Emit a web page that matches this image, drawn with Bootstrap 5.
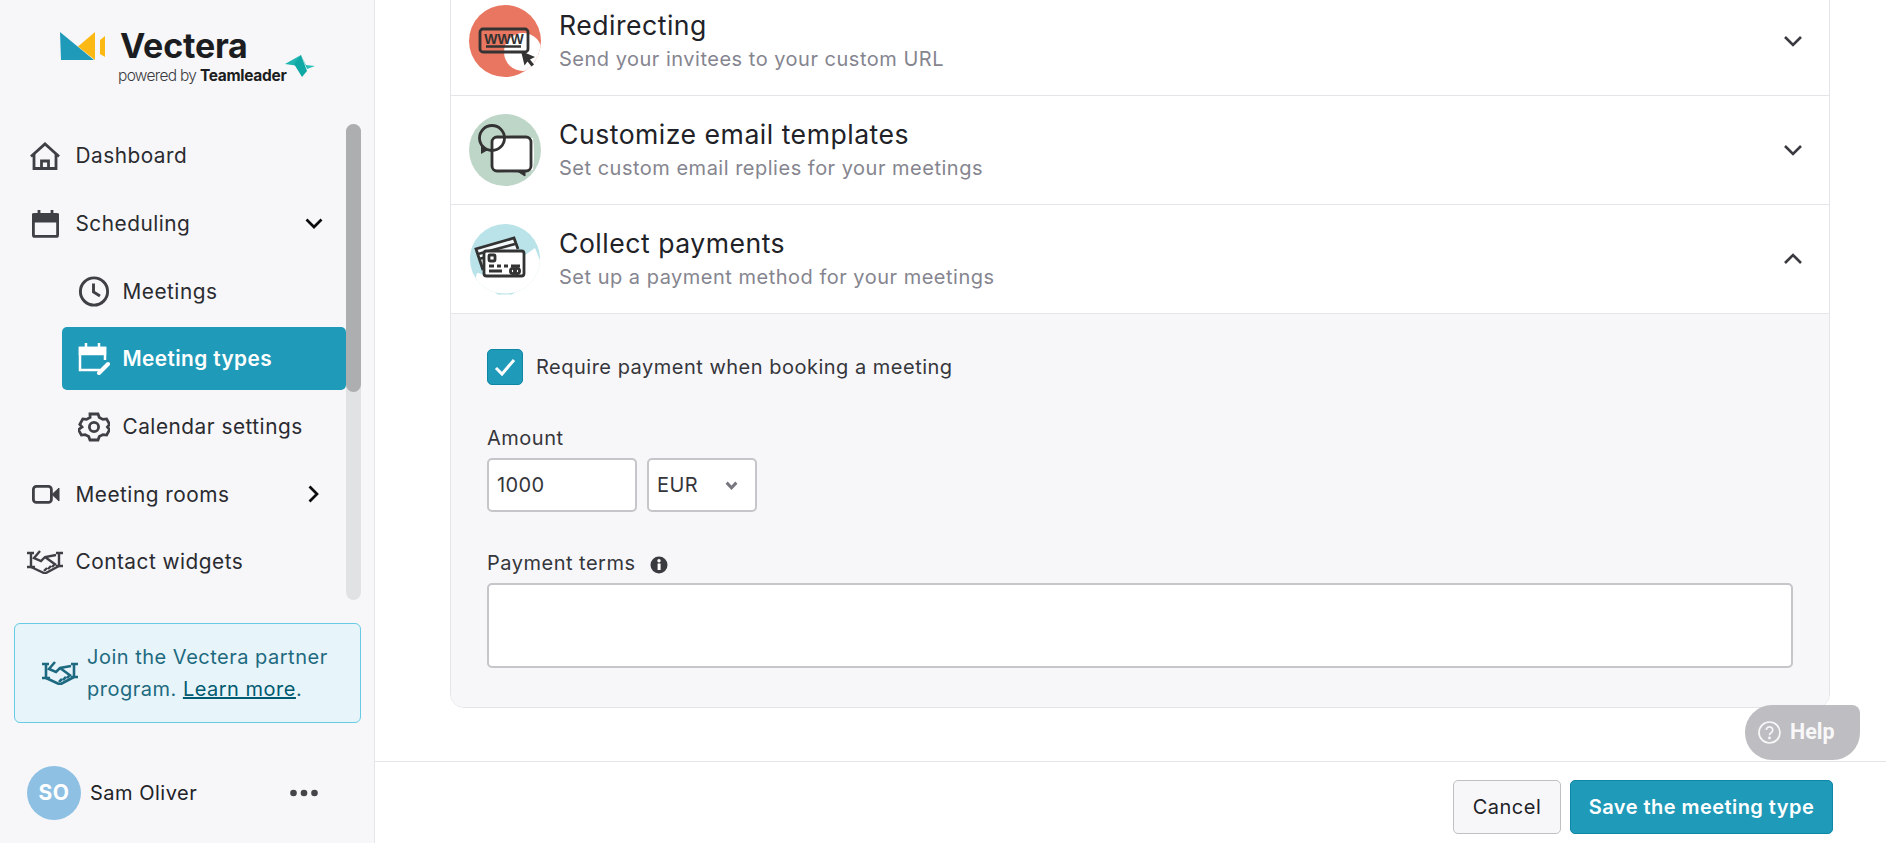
<!DOCTYPE html>
<html lang="en">
<head>
<meta charset="UTF-8">
<title>Vectera - Meeting types</title>
<link href="https://cdn.jsdelivr.net/npm/bootstrap@5.3.0/dist/css/bootstrap.min.css" rel="stylesheet">
<style>
  html, body { height: 100%; overflow: hidden; }
  body { font-family: "Inter", "Liberation Sans", sans-serif; color: #212227; background: #fff; }
  .app-shell { height: 843px; }

  /* sidebar */
  .side-panel { width: 375px; flex: 0 0 375px; background: #f7f7f9; border-right: 1px solid #e4e5e8; }
  .brand-area { height: 123.5px; padding: 28px 0 0 60px; }
  .brand-name { font-size: 34px; font-weight: 700; line-height: 36px; letter-spacing: -.2px; color: #1c1d21; margin-left: 15px; }
  .brand-sub { font-size: 15.5px; line-height: 18px; margin: 3px 0 0 58px; color: #3a3b40; font-weight: 300; letter-spacing: -.7px; white-space: nowrap; }
  .brand-sub b { font-weight: 700; color: #1c1d21; letter-spacing: -.3px; }
  .brand-fold { margin: -9px 0 0 -1px; }
  .nav-scroll { height: 476px; }
  .nav-stack { width: 346px; display: flex; flex-direction: column; gap: 4.67px; padding-top: 1px; }
  .nav-row { height: 63px; display: flex; align-items: center; gap: 12.5px; padding-left: 27px; color: #2a2b30; font-size: 20.8px; letter-spacing: .5px; text-decoration: none; border-radius: 5px; }
  .nav-row svg.ico { width: 36px; flex: 0 0 36px; }
  .nav-row.sub-row { margin-left: 62px; padding-left: 16px; }
  .nav-row.sub-row svg.ico { width: 32px; flex: 0 0 32px; }
  .nav-row.is-current { background: #209ab9; color: #fff; font-weight: 600; letter-spacing: .4px; }
  .nav-caret { margin-left: auto; margin-right: 23px; }
  .fake-track { width: 15px; background: #e1e2e4; border-radius: 8px; }
  .fake-thumb { height: 268px; background: #adaeb0; border-radius: 8px; }
  .partner-box { margin: 23px 13px 0 14px; height: 100px; background: #e7f4f9; border: 1px solid #66cbe3; border-radius: 6px; color: #1d6a80; font-size: 20px; line-height: 32px; letter-spacing: .5px; display: flex; align-items: center; padding-left: 27px; gap: 9px; }
  .partner-box a { color: #005a70; }
  .user-line { margin: 43px 0 0 27px; display: flex; align-items: center; font-size: 20px; letter-spacing: .5px; }
  .user-pic { width: 54px; height: 54px; border-radius: 50%; background: #8ec0e4; color: #fff; font-weight: 700; font-size: 21px; display: flex; align-items: center; justify-content: center; margin-right: 9px; }
  .user-dots { margin-left: 93px; }

  /* main */
  .main-col { min-width: 0; position: relative; }
  .scroll-area { height: 761px; overflow: hidden; padding: 0 56px 0 75px; }
  .opt-card { margin-top: -14px; border-color: #e4e5e8; border-radius: 14px; background: #fff; }
  .opt-row { height: 109px; display: flex; align-items: center; padding: 0 26px 0 18px; border-color: #e4e5e8; background: #fff; }
  .opt-art { width: 72px; height: 72px; flex: 0 0 72px; margin-right: 18px; }
  .opt-title { font-size: 26.6px; line-height: 30px; letter-spacing: .5px; color: #212227; }
  .opt-desc { font-size: 20px; line-height: 26px; letter-spacing: .5px; color: #85858f; margin-top: 6px; }
  .opt-caret { margin-left: auto; }
  .opt-body { background: #f7f7f9; padding: 35px 36px 36px 36px; border-radius: 0 0 14px 14px; height: 393px; }
  .pay-check { display: flex; align-items: center; margin: 0 0 41px; padding: 0; min-height: 0; }
  .pay-check .form-check-input { float: none; margin: 0 13px 0 0; width: 36px; height: 36px; border-radius: 5px; background-color: #209ab9; border-color: #0e87a6;
    background-size: 22px; background-image: url("data:image/svg+xml,%3csvg xmlns='http://www.w3.org/2000/svg' viewBox='0 0 22 22'%3e%3cpath fill='none' stroke='%23fff' stroke-width='3' d='M2 12l6 6L20 4'/%3e%3c/svg%3e"); }
  .pay-check label, .field-label { font-size: 20px; letter-spacing: .5px; color: #35363b; }
  .field-label { display: block; line-height: 24px; margin: 0 0 8px; }
  .money-row { gap: 10px; margin-bottom: 39px; }
  .money-input, .money-select, .terms-box { border: 2px solid #c6c6ca; border-radius: 5px; font-size: 20px; letter-spacing: .4px; color: #35363b; box-shadow: none; }
  .money-input { width: 150px; height: 54px; padding: 0 8px; }
  .money-select { width: 110px; height: 54px; padding: 0 8px; background-size: 13px; background-position: right 17px center;
    background-image: url("data:image/svg+xml,%3csvg xmlns='http://www.w3.org/2000/svg' viewBox='0 0 12 8'%3e%3cpath fill='none' stroke='%2377777f' stroke-width='2.8' d='M1.5 1.5L6 6l4.5-4.5'/%3e%3c/svg%3e"); }
  .terms-box { height: 85px; resize: none; }
  .bottom-bar { height: 82px; border-top: 1px solid #e4e5e8; padding: 18px 53px 0 0; gap: 9px; }
  .bar-btn { height: 54px; font-size: 20px; letter-spacing: .5px; border-radius: 5px; }
  .bar-cancel { width: 108px; background: #f7f7f9; border: 1px solid #c0c0c4; color: #212227; }
  .bar-save { width: 263px; background: #209ab9; border: 1px solid #0e87a6; color: #fff; font-weight: 600; letter-spacing: .45px; padding: 0; }
  .help-pill { position: absolute; right: 26px; top: 705px; width: 115px; height: 55px; background: #bebdc1; border-radius: 27px 8px 27px 27px; color: #f8f8f9; font-family: "Roboto", sans-serif; font-weight: 700; font-size: 21.5px; display: flex; align-items: center; padding-left: 13px; gap: 9px; }
</style>
</head>
<body>
<div class="app-shell d-flex">

  <!-- sidebar -->
  <aside class="side-panel d-flex flex-column">
    <div class="brand-area">
      <div class="d-flex align-items-center">
        <svg width="45" height="29" viewBox="0 0 45 29">
          <path d="M0 0L34 28H1z" fill="#209ab9"/>
          <path d="M35 0v28L18 14.5z" fill="#fdb913"/>
          <path d="M45 4v21l-5-3V8z" fill="#fdb913"/>
        </svg>
        <span class="brand-name">Vectera</span>
      </div>
      <div class="d-flex align-items-start">
        <div class="brand-sub">powered by <b>Teamleader</b></div>
        <svg class="brand-fold" width="30" height="23" viewBox="0 0 30 23">
          <path d="M0 9L16 0l-2 11z" fill="#1fb5b0"/>
          <path d="M16 0l-7 9 8 13 5-6z" fill="#0fa8a5"/>
          <path d="M16 0l6 14 8-3-9-1z" fill="#2cc0bb"/>
        </svg>
      </div>
    </div>

    <div class="nav-scroll d-flex">
      <nav class="nav-stack">
        <a class="nav-row" href="#">
          <svg class="ico" height="28" viewBox="0 0 36 28" fill="none" stroke="#3f4045" stroke-width="2.8"><path d="M4 14.5L18 2l14 12.5"/><path d="M7 12v14.5h22V12"/><path d="M14.5 26v-7h7v7"/></svg>
          Dashboard
        </a>
        <a class="nav-row" href="#">
          <svg class="ico" height="28" viewBox="0 0 36 28" fill="none" stroke="#3f4045" stroke-width="2.8"><rect x="6.4" y="4.4" width="24.2" height="22" rx="1.5"/><path d="M6.4 5h24.2v6H6.4z" fill="#3f4045"/><path d="M12 0v4M25 0v4"/></svg>
          Scheduling
          <svg class="nav-caret" width="18" height="11" viewBox="0 0 18 11" fill="none" stroke="#0c0c0e" stroke-width="2.7"><path d="M1.5 1.5L9 9l7.5-7.5"/></svg>
        </a>
        <a class="nav-row sub-row" href="#">
          <svg class="ico" height="31" viewBox="0 0 32 31" fill="none" stroke="#3f4045" stroke-width="2.9"><circle cx="16" cy="15.5" r="13.6"/><path d="M15.5 7.5v8.5l6.5 4"/></svg>
          Meetings
        </a>
        <a class="nav-row sub-row is-current" href="#">
          <svg class="ico" height="32" viewBox="0 0 32 32" fill="none" stroke="#fff" stroke-width="2.5"><path d="M27 17V5H2v22h20"/><path d="M2 5h25v6H2z" fill="#fff"/><path d="M8 0v4M21 0v4"/><path d="M21 30l9-9" stroke-width="4" stroke-linecap="round"/></svg>
          Meeting types
        </a>
        <a class="nav-row sub-row" href="#">
          <svg class="ico" height="30" viewBox="0 0 32 30" fill="none" stroke="#3f4045" stroke-width="2.8"><path d="M12 2.5h8l1.3 3.4 3.6 2 3.7-.5 3 5.4-2.2 2.7 2.2 2.7-3 5.4-3.7-.5-3.6 2-1.3 3.4h-8l-1.3-3.4-3.6-2-3.7.5-3-5.4L4 15.5 1.8 12.8l3-5.4 3.7.5 3.6-2z" transform="translate(0 -.5)"/><circle cx="16" cy="15" r="4.6"/></svg>
          Calendar settings
        </a>
        <a class="nav-row" href="#">
          <svg class="ico" height="19" viewBox="0 0 36 19" fill="none" stroke="#3f4045" stroke-width="2.8"><rect x="6.4" y="1.4" width="18" height="16" rx="3"/><path d="M25 9.5L32 3v13z" fill="#3f4045" stroke-width="1"/></svg>
          Meeting rooms
          <svg class="nav-caret" width="11" height="18" viewBox="0 0 11 18" fill="none" stroke="#0c0c0e" stroke-width="2.7" style="margin-right:27px"><path d="M1.5 1.5L9 9l-7.5 7.5"/></svg>
        </a>
        <a class="nav-row" href="#">
          <svg class="ico" height="24" viewBox="0 0 36 24" fill="none" stroke="#3f4045" stroke-width="2.4"><path d="M0 3h7M4 3v14M0 17h8M29 3h7M32 3v13M29 16h7"/><path d="M4 17l14 6.5L32 16"/><path d="M13 1L7 8l7 3 4-4 11-2M18 7l11 8M17 21l3-3M21 19l3-3M25 17l2-2"/></svg>
          Contact widgets
        </a>
      </nav>
      <div class="fake-track"><div class="fake-thumb"></div></div>
    </div>

    <div class="partner-box">
      <svg width="36" height="24" viewBox="0 0 36 24" fill="none" stroke="#1d6a80" stroke-width="2.6" class="flex-shrink-0"><path d="M0 3h7M4 3v14M0 17h8M29 3h7M32 3v13M29 16h7"/><path d="M4 17l14 6.5L32 16"/><path d="M13 1L7 8l7 3 4-4 11-2M18 7l11 8M17 21l3-3M21 19l3-3M25 17l2-2"/></svg>
      <div>Join the Vectera partner<br>program. <a href="#">Learn more</a>.</div>
    </div>

    <div class="user-line">
      <div class="user-pic">SO</div>
      <span>Sam Oliver</span>
      <svg class="user-dots" width="28" height="8" viewBox="0 0 28 8" fill="#444549"><circle cx="3.5" cy="4" r="3.3"/><circle cx="14" cy="4" r="3.3"/><circle cx="24.5" cy="4" r="3.3"/></svg>
    </div>
  </aside>

  <!-- main content -->
  <main class="main-col flex-grow-1 d-flex flex-column">
    <div class="scroll-area">
      <div class="card opt-card overflow-hidden">
        <ul class="list-group list-group-flush">
          <li class="list-group-item opt-row">
            <svg class="opt-art" viewBox="0 0 72 72">
              <defs><clipPath id="artA"><circle cx="36" cy="36" r="36"/></clipPath></defs>
              <circle cx="36" cy="36" r="36" fill="#e87660"/>
              <circle cx="54" cy="47" r="19" fill="#fff" clip-path="url(#artA)"/>
              <rect x="11" y="24" width="48" height="23" rx="3" fill="none" stroke="#333" stroke-width="2.8"/>
              <text x="35" y="39" text-anchor="middle" font-family="Liberation Sans, sans-serif" font-weight="700" font-size="14" fill="#333">WWW</text>
              <path d="M17 41.5h35" stroke="#333" stroke-width="2.4"/>
              <path d="M52 46l14 6-5 2.5 4 5-2.5 2-4-5-3 4z" fill="#333"/>
            </svg>
            <div>
              <div class="opt-title">Redirecting</div>
              <div class="opt-desc">Send your invitees to your custom URL</div>
            </div>
            <svg class="opt-caret" width="20" height="12" viewBox="0 0 20 12" fill="none" stroke="#3a3b40" stroke-width="2.6"><path d="M2 2l8 8 8-8"/></svg>
          </li>
          <li class="list-group-item opt-row">
            <svg class="opt-art" viewBox="0 0 72 72">
              <circle cx="36" cy="36" r="36" fill="#bed6c8"/>
              <path d="M24 24q8-4 20-2t20 2q2 16 0 32-16 4-34 2-6 0-6-8z" fill="#fff"/>
              <circle cx="23" cy="24" r="12.5" fill="none" stroke="#333" stroke-width="2.8"/>
              <path d="M12 30v10l7-4" fill="#333"/>
              <rect x="23" y="23" width="39" height="34" rx="5" fill="none" stroke="#333" stroke-width="2.8"/>
              <path d="M48 57l8 5v-5" fill="#333" stroke="#333" stroke-width="1"/>
            </svg>
            <div>
              <div class="opt-title">Customize email templates</div>
              <div class="opt-desc">Set custom email replies for your meetings</div>
            </div>
            <svg class="opt-caret" width="20" height="12" viewBox="0 0 20 12" fill="none" stroke="#3a3b40" stroke-width="2.6"><path d="M2 2l8 8 8-8"/></svg>
          </li>
          <li class="list-group-item opt-row">
            <svg class="opt-art" viewBox="0 0 72 72">
              <defs><clipPath id="artC"><circle cx="36" cy="36" r="35"/></clipPath></defs>
              <circle cx="36" cy="36" r="35" fill="#b9e3e8"/>
              <path d="M8 50q4 0 6 2l16 0 8-20q4-5 8-3l6 6 14-10 8 20v34H0z" fill="#fff" clip-path="url(#artC)"/>
              <path d="M26 69.500q10 2 20 0l-3 2h-14z" fill="#b9e3e8"/>
              <g fill="none" stroke="#333" stroke-width="2.8">
                <path d="M14 47l-7-21 38-11 4 11" fill="#f4fafb"/>
                <path d="M9 31l37-10M10 36l22-6"/>
                <rect x="15" y="28" width="40" height="25" rx="2.5" fill="#fff"/>
                <rect x="20" y="32" width="6" height="6" rx="1"/>
                <path d="M20 43h5m3 0h4m3 0h4m3 0h9M20 48h13"/>
                <circle cx="44" cy="48" r="2.6"/><circle cx="48" cy="48" r="2.6"/>
              </g>
            </svg>
            <div>
              <div class="opt-title">Collect payments</div>
              <div class="opt-desc">Set up a payment method for your meetings</div>
            </div>
            <svg class="opt-caret" width="20" height="12" viewBox="0 0 20 12" fill="none" stroke="#3a3b40" stroke-width="2.6"><path d="M2 10l8-8 8 8"/></svg>
          </li>
          <li class="list-group-item opt-body">
            <div class="form-check pay-check">
              <input class="form-check-input" type="checkbox" id="needPay" checked>
              <label for="needPay">Require payment when booking a meeting</label>
            </div>
            <label class="field-label" for="amt">Amount</label>
            <div class="d-flex money-row">
              <input class="form-control money-input" id="amt" value="1000">
              <select class="form-select money-select"><option>EUR</option></select>
            </div>
            <label class="field-label" for="terms">Payment terms
              <svg class="ms-2" width="18" height="18" viewBox="0 0 18 18"><circle cx="9" cy="9" r="8.5" fill="#3a3b40"/><rect x="7.6" y="7.5" width="3" height="6.5" fill="#fff"/><circle cx="9" cy="4.8" r="1.7" fill="#fff"/></svg>
            </label>
            <textarea class="form-control terms-box" id="terms"></textarea>
          </li>
        </ul>
      </div>
    </div>

    <div class="bottom-bar d-flex justify-content-end align-items-start">
      <button class="btn bar-btn bar-cancel">Cancel</button>
      <button class="btn bar-btn bar-save">Save the meeting type</button>
    </div>

    <div class="help-pill">
      <svg width="23" height="23" viewBox="0 0 23 23" fill="none" stroke="#f8f8f9" stroke-width="1.7"><circle cx="11.5" cy="11.5" r="10.5"/><path d="M8.3 9a3.2 3.2 0 1 1 4.8 2.8c-1.1.7-1.6 1.2-1.6 2.500"/><circle cx="11.5" cy="17" r=".6"/></svg>
      Help
    </div>
  </main>
</div>

<script src="https://cdn.jsdelivr.net/npm/bootstrap@5.3.0/dist/js/bootstrap.bundle.min.js"></script>
</body>
</html>
